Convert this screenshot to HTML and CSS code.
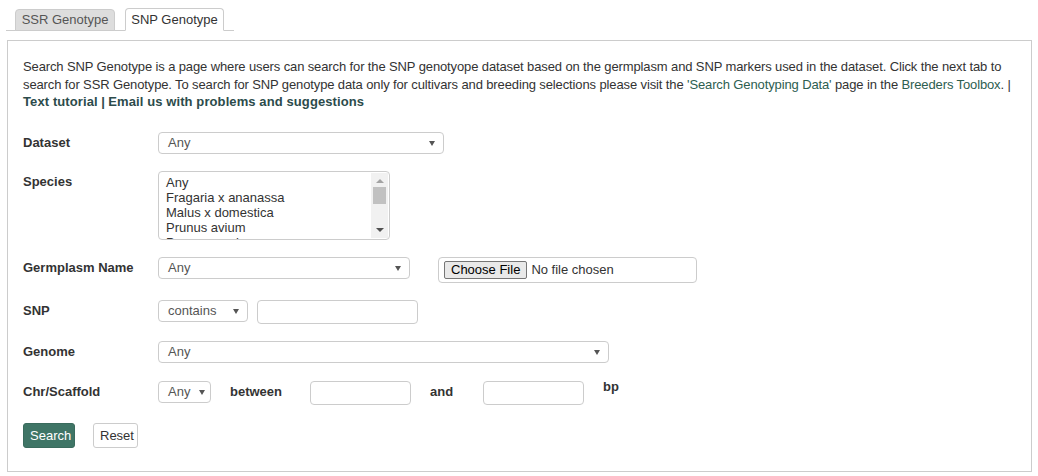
FILE: index.html
```html
<!DOCTYPE html>
<html>
<head>
<meta charset="utf-8">
<link rel="stylesheet" href="styles.css">
</head>
<body>
<div class="tabs">
  <div class="tab tab-off">SSR Genotype</div>
  <div class="tab tab-on">SNP Genotype</div>
</div>
<div class="panel">
  <p class="intro">Search SNP Genotype is a page where users can search for the SNP genotyope dataset based on the germplasm and SNP markers used in the dataset. Click the next tab to search for SSR Genotype. To search for SNP genotype data only for cultivars and breeding selections please visit the <a class="lnk" href="#">'Search Genotyping Data'</a> page in the <a class="lnk" href="#">Breeders Toolbox</a>. | <a class="blnk" href="#">Text tutorial</a> <b class="bsep">|</b> <a class="blnk" href="#">Email us with problems and suggestions</a></p>

  <div class="row r-dataset">
    <div class="lbl">Dataset</div>
    <div class="sel w-dataset"><span>Any</span><i class="arr"></i></div>
  </div>

  <div class="row r-species">
    <div class="lbl">Species</div>
    <div class="listbox">
      <div class="opts">
        <div>Any</div>
        <div>Fragaria x ananassa</div>
        <div>Malus x domestica</div>
        <div>Prunus avium</div>
        <div>Prunus persica</div>
      </div>
      <div class="sbar">
        <i class="sb-up"></i>
        <div class="sb-thumb"></div>
        <i class="sb-down"></i>
      </div>
    </div>
  </div>

  <div class="row r-germ">
    <div class="lbl">Germplasm Name</div>
    <div class="sel w-germ"><span>Any</span><i class="arr"></i></div>
    <div class="file"><span class="fbtn">Choose File</span><span class="ftxt">No file chosen</span></div>
  </div>

  <div class="row r-snp">
    <div class="lbl">SNP</div>
    <div class="sel w-snp"><span>contains</span><i class="arr"></i></div>
    <div class="inp w-snpin"></div>
  </div>

  <div class="row r-genome">
    <div class="lbl">Genome</div>
    <div class="sel w-genome"><span>Any</span><i class="arr"></i></div>
  </div>

  <div class="row r-chr">
    <div class="lbl">Chr/Scaffold</div>
    <div class="sel w-chr"><span>Any</span><i class="arr"></i></div>
    <div class="mid w-between">between</div>
    <div class="inp w-range"></div>
    <div class="mid w-and">and</div>
    <div class="inp w-range"></div>
    <div class="mid bp">bp</div>
  </div>

  <div class="btns">
    <button class="btn btn-search">Search</button>
    <button class="btn btn-reset">Reset</button>
  </div>
</div>
</body>
</html>
```
FILE: styles.css
```css
* { box-sizing: border-box; }
body {
  margin: 0;
  font-family: "Liberation Sans", Arial, sans-serif;
  font-size: 13px;
  color: #333;
  background: #fff;
}
.tabs {
  display: flex;
  gap: 10px;
  margin: 8px 0 0 6px;
  width: 228px;
  padding-left: 9px;
  border-bottom: 1px solid #ccc;
  height: 23px;
}
.tab {
  height: 23px;
  width: 100px;
  border: 1px solid #ccc;
  border-radius: 4px 4px 0 0;
  text-align: center;
  line-height: 21px;
  font-size: 13px;
}
.tab-off {
  background: #ddd;
  color: #555;
  margin-top: 1px;
  height: 22px;
  line-height: 20px;
}
.tab-on {
  background: #fff;
  color: #333;
  border-bottom-color: #fff;
  width: 99px;
  height: 23px;
}
.panel {
  margin: 9px 0 0 7px;
  width: 1025px;
  border: 1px solid #ccc;
  padding: 17px 15px 23px 15px;
}
.intro {
  margin: 0 0 21px 0;
  line-height: 17.5px;
  font-size: 13px;
  letter-spacing: -0.12px;
  color: #333;
}
.lnk { color: #2d5e50; text-decoration: none; }
.blnk { color: #2c4b4b; text-decoration: none; font-weight: bold; letter-spacing: 0.1px; }
.bsep { color: #2c4b4b; }
.row {
  display: flex;
  align-items: flex-start;
}
.r-dataset { margin-bottom: 17px; }
.r-species { margin-bottom: 17px; }
.r-germ { margin-bottom: 17px; }
.r-snp { margin-bottom: 17px; }
.r-genome { margin-bottom: 18px; }
.r-chr { margin-bottom: 18px; }
.lbl {
  width: 135px;
  flex: none;
  font-weight: bold;
  line-height: 18px;
  padding-top: 2px;
  color: #333;
}
.sel {
  height: 22px;
  border: 1px solid #ccc;
  border-radius: 4px;
  display: flex;
  align-items: center;
  justify-content: space-between;
  padding: 0 8px 0 9px;
  color: #555;
  background: #fff;
  flex: none;
}
.arr {
  width: 0;
  height: 0;
  border-left: 3px solid transparent;
  border-right: 3px solid transparent;
  border-top: 5px solid #555;
  margin-top: 1px;
}
.w-dataset { width: 286px; }
.w-germ { width: 252px; }
.w-snp { width: 90px; }
.w-genome { width: 451px; }
.w-chr { width: 53px; padding-right: 5px; }
.inp {
  height: 24px;
  border: 1px solid #ccc;
  border-radius: 4px;
  background: #fff;
  flex: none;
}
.w-snpin { width: 161px; margin-left: 9px; }
.w-range { width: 101px; }
.listbox {
  width: 232px;
  height: 69px;
  border: 1px solid #ccc;
  border-radius: 4px;
  display: flex;
  overflow: hidden;
  flex: none;
}
.opts {
  flex: 1;
  padding: 3px 0 0 7px;
  line-height: 15px;
  color: #333;
  overflow: hidden;
}
.sbar {
  width: 17px;
  margin: 1px 1px 1px 0;
  background: #f1f1f1;
  display: flex;
  flex-direction: column;
  align-items: center;
}
.sb-up {
  margin-top: 6px;
  width: 0; height: 0;
  border-left: 4px solid transparent;
  border-right: 4px solid transparent;
  border-bottom: 4px solid #a3a3a3;
}
.sb-thumb {
  margin-top: 4px;
  width: 13px;
  height: 17px;
  background: #c1c1c1;
}
.sb-down {
  margin-top: auto;
  margin-bottom: 6px;
  width: 0; height: 0;
  border-left: 4px solid transparent;
  border-right: 4px solid transparent;
  border-top: 4px solid #505050;
}
.file {
  margin-left: 28px;
  width: 259px;
  height: 26px;
  border: 1px solid #ccc;
  border-radius: 4px;
  display: flex;
  align-items: center;
  padding-left: 5px;
  flex: none;
}
.fbtn {
  height: 18px;
  line-height: 16px;
  padding: 0 6px;
  border: 1px solid #767676;
  border-radius: 2px;
  background: #e9e9e9;
  color: #000;
  font-size: 13px;
}
.ftxt { margin-left: 4px; color: #333; }
.mid {
  font-weight: bold;
  line-height: 18px;
  padding-top: 2px;
  flex: none;
}
.w-between { width: 80px; margin-left: 19px; }
.w-and { width: 53px; margin-left: 19px; }
.bp { margin-left: 19px; padding-top: 0; margin-top: -3px; }
.btns {
  display: flex;
  gap: 18px;
}
.btn {
  font-family: "Liberation Sans", Arial, sans-serif;
  font-size: 13px;
  height: 25px;
  border-radius: 3px;
  padding: 0 6px;
  cursor: pointer;
}
.btn-search {
  width: 52px;
  background: #3f7566;
  border: 1px solid #3a6b5d;
  color: #fff;
}
.btn-reset {
  width: 45px;
  background: #fff;
  border: 1px solid #ccc;
  color: #333;
}
```
